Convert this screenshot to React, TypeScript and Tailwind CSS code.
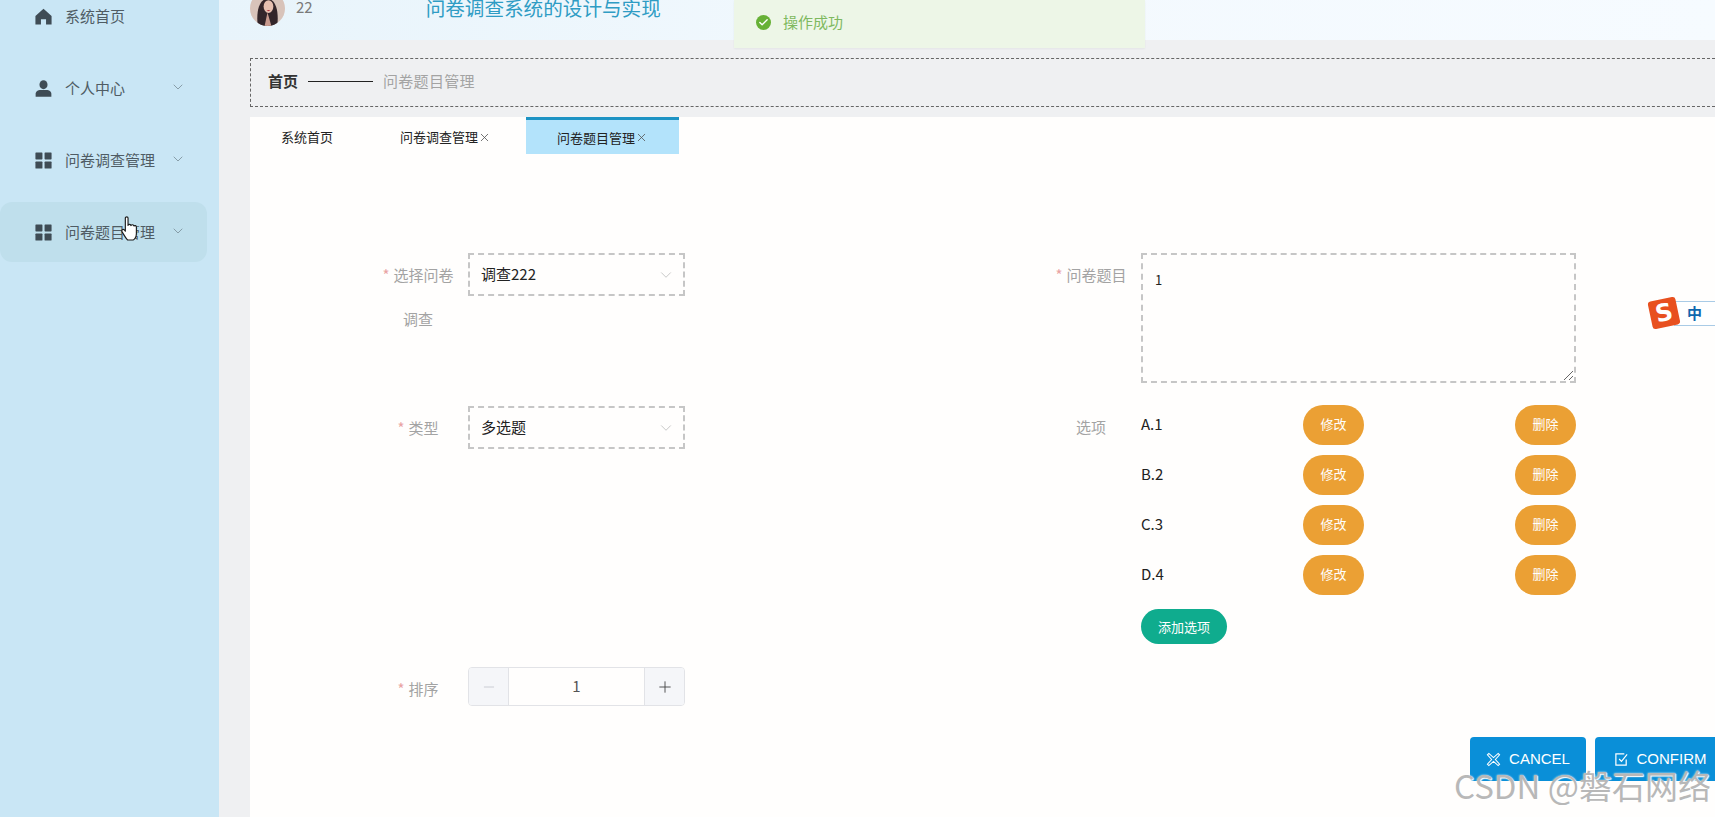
import { Check, ChevronDown, Minus, Plus, X } from "lucide-react"

const HomeIcon = () => (
  <svg viewBox="0 0 16 16" className="h-[17px] w-[17px] fill-[#3f4c55]">
    <path d="M8 .8 15.6 7.6V15.6H10.4V10.6H5.6V15.6H.4V7.6Z" />
  </svg>
)

const UserIcon = () => (
  <svg viewBox="0 0 16 16" className="h-[17px] w-[17px] fill-[#3f4c55]">
    <ellipse cx="8" cy="4.4" rx="3.8" ry="4.2" />
    <path d="M.6 15.8V13c0-2.4 2.4-3.6 4.4-3.6h6c2 0 4.4 1.2 4.4 3.6v2.8Z" />
  </svg>
)

const GridIcon = () => (
  <svg viewBox="0 0 16 16" className="h-[17px] w-[17px] fill-[#3f4c55]">
    <rect x="0.4" y="0.4" width="6.6" height="6.6" rx="0.6" />
    <rect x="9" y="0.4" width="6.6" height="6.6" rx="0.6" />
    <rect x="0.4" y="9" width="6.6" height="6.6" rx="0.6" />
    <rect x="9" y="9" width="6.6" height="6.6" rx="0.6" />
  </svg>
)

const Avatar = () => (
  <svg viewBox="0 0 36 36" className="h-[35px] w-[35px] shrink-0 rounded-full">
    <rect width="36" height="36" fill="#d8c3ba" />
    <path d="M8 36C6 20 10 8 18 8s12 12 10 28Z" fill="#33252a" />
    <ellipse cx="19" cy="16" rx="5" ry="6.5" fill="#e6bfb0" />
    <path d="M15 36l3-14 4 14Z" fill="#c99a8e" />
    <path d="M17 19.5h4l-2 1.3Z" fill="#b5363f" />
  </svg>
)

const HandCursor = () => (
  <svg viewBox="0 0 16 24" className="absolute left-[121px] top-[216px] h-[25px] w-[17px]">
    <path
      d="M4 2c0-1.6 2.6-1.6 2.6 0v7c.6-1.4 2.6-1.2 2.8.2.6-1.2 2.6-1 2.8.4.8-.8 2.4-.4 2.4 1V17c0 3-1.6 5.6-3 6H6.2C4.6 21.6 2.4 17.8.8 15c-.8-1.6 1-2.8 2.2-1.6l1 1.2Z"
      fill="#fff"
      stroke="#1b1b1b"
      strokeWidth="1.1"
      strokeLinejoin="round"
    />
  </svg>
)

const CancelIcon = () => (
  <svg viewBox="0 0 16 16" className="h-[15px] w-[15px] fill-none stroke-white" strokeWidth="1.1">
    <path d="M3 1.500 8 6l5-4.500 1.500 1.500L10 8l4.500 5-1.500 1.500L8 10l-5 4.500L1.500 13 6 8 1.500 3Z" />
  </svg>
)

const ConfirmIcon = () => (
  <svg viewBox="0 0 16 16" className="h-[15px] w-[15px] fill-none stroke-white" strokeWidth="1.3">
    <path d="M11 2H2v12h11V8" />
    <path d="M5.500 7.500 8 10l6-7.500" />
  </svg>
)

const menus = [
  { name: "系统首页", icon: <HomeIcon />, arrow: false, hover: false },
  { name: "个人中心", icon: <UserIcon />, arrow: true, hover: false },
  { name: "问卷调查管理", icon: <GridIcon />, arrow: true, hover: false },
  { name: "问卷题目管理", icon: <GridIcon />, arrow: true, hover: true },
]

const options = ["A.1", "B.2", "C.3", "D.4"]

function Label({ text, required = true, extra }: { text: string; required?: boolean; extra?: string }) {
  return (
    <div className="w-[98px] shrink-0 pr-[2px] text-center text-[15px] leading-[44px] text-[#a3a3a3]">
      {required && <span className="mr-1 text-[#e9a3a3]">*</span>}
      {text}
      {extra && <div>{extra}</div>}
    </div>
  )
}

function SelectBox({ value }: { value: string }) {
  return (
    <div className="flex h-[43px] w-[217px] items-center justify-between border-2 border-dashed border-[#c6c6c6] pl-[11px] pr-2 text-[15px] text-[#222]">
      {value}
      <ChevronDown className="h-[18px] w-[18px] text-[#bcbcbc]" strokeWidth={1.1} />
    </div>
  )
}

export default function App() {
  return (
    <div className="relative flex h-screen overflow-hidden bg-[#eff0f2] font-['Noto_Sans_CJK_SC','Open_Sans',sans-serif]">
      <aside className="w-[219px] shrink-0 bg-[#c9e6f5] pr-3">
        <nav className="-mt-[14px] flex flex-col gap-3">
          {menus.map((m) => (
            <div
              key={m.name}
              className={`flex h-[60px] items-center rounded-r-xl pl-[35px] pr-[21px] text-[15px] text-[#4f5c64] ${m.hover ? "rounded-l-xl bg-[#bfdfec]" : ""}`}
            >
              {m.icon}
              <span className="ml-[13px]">{m.name}</span>
              {m.arrow && <ChevronDown className="-mt-[2px] ml-auto h-4 w-4 text-[#7d929c]" strokeWidth={1.3} />}
            </div>
          ))}
        </nav>
      </aside>

      <div className="flex min-w-0 flex-1 flex-col">
        <header className="relative h-10 shrink-0 overflow-visible bg-gradient-to-r from-[#e8f4fb] via-[#f3f9fe] to-[#f6fbff]">
          <div className="-mt-[9px] flex items-center pl-[31px]">
            <Avatar />
            <span className="-mt-[2px] ml-[11px] text-[15px] text-[#7a7a7a]">22</span>
            <h1 className="-mt-[1px] ml-[113px] text-[19.6px] leading-[36px] text-[#2f9cc4]">问卷调查系统的设计与实现</h1>
          </div>
          <div className="absolute left-[515px] top-0 flex h-12 w-[411px] items-center bg-[#edf6e7] pb-[3px] pl-[22px] shadow-[0_1px_2px_rgba(0,0,0,0.05)]">
            <div className="flex h-[15px] w-[15px] items-center justify-center rounded-full bg-[#67b136]">
              <Check className="h-[11px] w-[11px] text-white" strokeWidth={3} />
            </div>
            <span className="ml-3 text-[15px] text-[#7fb95f]">操作成功</span>
          </div>
        </header>

        <div className="ml-[31px] mt-[18px] flex h-[49px] shrink-0 items-center border border-r-0 border-dashed border-[#666] pb-[2px] pl-[17px] text-[15px]">
          <span className="font-semibold text-[#333]">首页</span>
          <span className="ml-[10px] h-px w-[65px] bg-[#222]" />
          <span className="ml-[10px] tracking-[0.3px] text-[#a3a3a3]">问卷题目管理</span>
        </div>

        <main className="ml-[31px] mt-[10px] min-h-0 flex-1 overflow-hidden bg-[#fffefd]">
          <div className="flex h-[37px] text-[13px] text-[#222]">
            <div className="flex w-[138px] items-center pl-[31px] pt-[3px]">系统首页</div>
            <div className="flex w-[138px] items-center pl-3 pt-[3px]">
              问卷调查管理
              <X className="h-[13px] w-[13px] text-[#555]" strokeWidth={1.5} />
            </div>
            <div className="flex w-[153px] items-center border-t-[3px] border-[#1d93c4] bg-[#b3e3fb] pl-[31px] pt-[1px]">
              问卷题目管理
              <X className="h-[13px] w-[13px] text-[#555]" strokeWidth={1.5} />
            </div>
          </div>

          <div className="ml-[120px] mt-[99px] flex">
            <div className="w-[315px]">
              <div className="flex">
                <Label text="选择问卷" extra="调查" />
                <SelectBox value="调查222" />
              </div>
              <div className="mt-[65px] flex">
                <Label text="类型" />
                <SelectBox value="多选题" />
              </div>
              <div className="mt-[217px] flex">
                <Label text="排序" />
                <div className="flex h-[39px] w-[217px] items-center overflow-hidden rounded border border-[#e2e3e7] text-[15px] text-[#555]">
                  <div className="flex h-full w-10 items-center justify-center border-r border-[#e2e3e7] bg-[#f5f6f9]">
                    <Minus className="h-4 w-4 text-[#c0c4cc]" strokeWidth={1.2} />
                  </div>
                  <div className="flex-1 text-center">1</div>
                  <div className="flex h-full w-10 items-center justify-center border-l border-[#e2e3e7] bg-[#f5f6f9]">
                    <Plus className="h-[18px] w-[18px] text-[#444]" strokeWidth={1.2} />
                  </div>
                </div>
              </div>
            </div>

            <div className="ml-[358px] w-[534px]">
              <div className="flex">
                <Label text="问卷题目" />
                <div className="relative h-[130px] w-[435px] border-2 border-dashed border-[#c6c6c6] pl-3 pt-3 text-[13px] leading-[26px] text-[#222]">
                  1
                  <svg viewBox="0 0 12 12" className="absolute bottom-0 right-0 h-3 w-3 stroke-[#666]">
                    <path d="M2 11 11 2M7 11l4-4" fill="none" />
                  </svg>
                </div>
              </div>
              <div className="mt-[22px] flex">
                <Label text="选项" required={false} />
                <div className="w-[435px]">
                  <div className="flex flex-col gap-[10px]">
                    {options.map((o) => (
                      <div key={o} className="flex h-10 items-center text-[15px] text-[#222]">
                        <span className="w-[162px] pb-[2px]">{o}</span>
                        <button className="h-10 w-[61px] rounded-full bg-[#eba034] pb-[3px] text-[13px] text-white">修改</button>
                        <button className="ml-auto h-10 w-[61px] rounded-full bg-[#eba034] pb-[3px] text-[13px] text-white">删除</button>
                      </div>
                    ))}
                  </div>
                  <button className="mt-[14px] h-[35px] w-[86px] rounded-full bg-[#0fac8e] text-[13px] text-white">添加选项</button>
                </div>
              </div>
            </div>
          </div>

          <div className="ml-[1220px] mt-[26px] flex w-[260px] gap-[9px] font-['Liberation_Sans',sans-serif] text-[15px] text-white">
            <button className="flex h-11 w-[116px] shrink-0 items-center justify-center gap-2 rounded bg-[#0a8fd8]">
              <CancelIcon />
              CANCEL
            </button>
            <button className="flex h-11 w-[130px] shrink-0 items-center justify-center gap-2 rounded bg-[#0a8fd8]">
              <ConfirmIcon />
              CONFIRM
            </button>
          </div>
        </main>
      </div>

      <HandCursor />

      {/* 输入法状态条 */}
      <div className="absolute left-[1650px] top-[299px] flex items-center">
        <div className="z-10 flex h-7 w-7 -rotate-12 items-center justify-center rounded-[3px] bg-[#e8501f] font-['DejaVu_Sans',sans-serif] text-[24px] font-bold leading-none text-white">
          S
        </div>
        <div className="-ml-1 flex h-[25px] w-[50px] items-center border border-[#a9cbe6] bg-white pl-3 text-[15px] font-bold text-[#0f67ae]">
          中<span className="ml-2">•</span>
        </div>
      </div>

      <div className="absolute left-[1454px] top-[763px] text-[33px] leading-[44px] text-[#b8b8b8] [text-shadow:0_0_2px_#fff,1px_1px_1px_#fff]">
        CSDN @磐石网络
      </div>
    </div>
  )
}
